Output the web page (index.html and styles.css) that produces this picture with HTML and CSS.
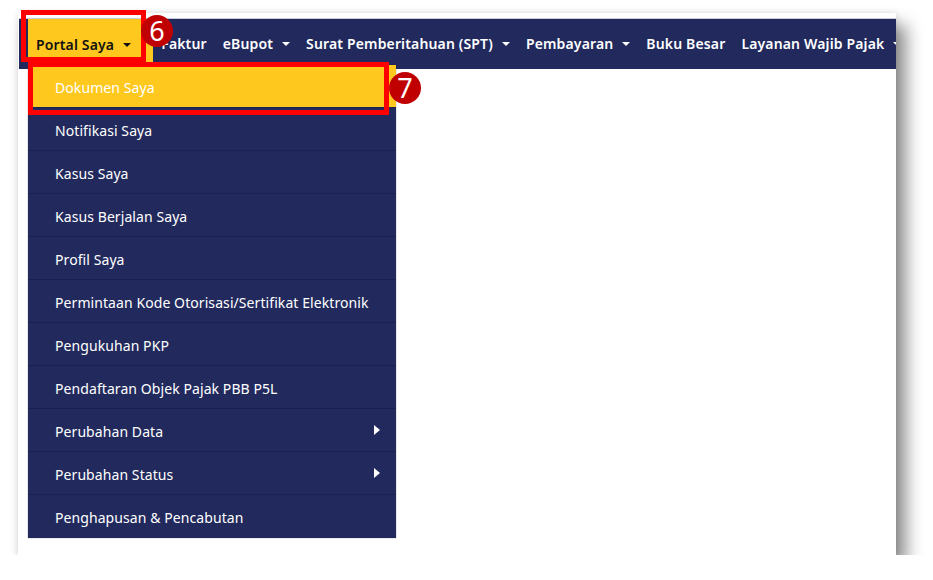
FILE: index.html
```html
<!DOCTYPE html>
<html lang="en">
    <head>
        <meta charset="UTF-8">
        <meta name="viewport" content="width=device-width, initial-scale=1.0">
        <title>Portal Saya - Dokumen Saya</title>
        <link rel="stylesheet" href="styles.css">
    </head>
    <body>
        <div class="shot">
            <div class="card">
                <nav class="navbar">
                    <ul class="nav">
                        <li class="nav-item active"><span class="caret">Portal Saya</span></li>
                        <li class="nav-item">Faktur</li>
                        <li class="nav-item"><span class="caret">eBupot</span></li>
                        <li class="nav-item"><span class="caret">Surat Pemberitahuan (SPT)</span></li>
                        <li class="nav-item"><span class="caret">Pembayaran</span></li>
                        <li class="nav-item">Buku Besar</li>
                        <li class="nav-item"><span class="caret">Layanan Wajib Pajak</span></li>
                    </ul>
                </nav>

                <ul class="dropdown">
                    <li class="dropdown-item active">Dokumen Saya</li>
                    <li class="dropdown-item">Notifikasi Saya</li>
                    <li class="dropdown-item">Kasus Saya</li>
                    <li class="dropdown-item">Kasus Berjalan Saya</li>
                    <li class="dropdown-item">Profil Saya</li>
                    <li class="dropdown-item">Permintaan Kode Otorisasi/Sertifikat Elektronik</li>
                    <li class="dropdown-item">Pengukuhan PKP</li>
                    <li class="dropdown-item">Pendaftaran Objek Pajak PBB P5L</li>
                    <li class="dropdown-item submenu">Perubahan Data</li>
                    <li class="dropdown-item submenu">Perubahan Status</li>
                    <li class="dropdown-item">Penghapusan &amp; Pencabutan</li>
                </ul>

                <!-- tutorial highlights -->
                <div class="highlight highlight-portal"></div>
                <div class="highlight highlight-dokumen"></div>
                <div class="step step-6">6</div>
                <div class="step step-7">7</div>
            </div>
        </div>
    </body>
</html>
```

FILE: styles.css
```css
body {
    margin: 0;
    padding: 0;
    background-color: #fff;
    font-family: "Noto Sans", "Open Sans", sans-serif;
    overflow: hidden;
}

.shot {
    padding: 13px 0 0 18px;
}

.card {
    position: relative;
    width: 878px;
    height: 542px;
    background-color: #fff;
    box-shadow: 0 0 6px rgba(0, 0, 0, 0.12), 10px 12px 16px rgba(0, 0, 0, 0.45);
}

.navbar {
    position: relative;
    top: 5px;
    margin-left: 1px;
    height: 51px;
    background-color: #222a5d;
    border-top: 1px solid #c9cbd6;
    box-sizing: border-box;
    overflow: hidden;
}

.nav {
    list-style: none;
    margin: 0;
    padding: 0 0 0 9px;
    display: flex;
    height: 100%;
    white-space: nowrap;
}

.nav-item {
    display: flex;
    align-items: center;
    padding: 0 8px 1px;
    color: #fff;
    font-size: 14px;
    font-weight: 600;
    letter-spacing: 0.15px;
}

.nav-item.active {
    background-color: #fec81f;
    color: #111;
    padding-right: 22px;
    padding-bottom: 0;
}

.caret::after {
    content: "";
    display: inline-block;
    margin-left: 9px;
    vertical-align: 3px;
    border-top: 4px solid currentColor;
    border-left: 4px solid transparent;
    border-right: 4px solid transparent;
}

.dropdown {
    position: absolute;
    left: 10px;
    top: 52px;
    width: 368px;
    margin: 0;
    padding: 0;
    list-style: none;
    background-color: #222a5d;
    box-shadow: 0 0 1px rgba(0, 0, 0, 0.5);
}

.dropdown-item {
    position: relative;
    height: 43px;
    box-sizing: border-box;
    display: flex;
    align-items: center;
    padding: 2px 0 0 27px;
    color: #fff;
    font-size: 14px;
    letter-spacing: 0.08px;
    border-bottom: 1px solid #1a2150;
}

.dropdown-item:last-child {
    border-bottom: none;
}

.dropdown-item.active {
    background-color: #fec81f;
}

.submenu::after {
    content: "";
    position: absolute;
    right: 16px;
    top: 16px;
    border-left: 6px solid #fff;
    border-top: 5px solid transparent;
    border-bottom: 5px solid transparent;
}

.highlight {
    position: absolute;
    border: 5px solid #ff0000;
    box-sizing: border-box;
}

.highlight-portal {
    left: 3px;
    top: -3px;
    width: 125px;
    height: 52px;
}

.highlight-dokumen {
    left: 10px;
    top: 49px;
    width: 361px;
    height: 53px;
}

.step {
    position: absolute;
    width: 32px;
    height: 32px;
    border-radius: 50%;
    background-color: #c00000;
    color: #fff;
    font-size: 27px;
    line-height: 32px;
    text-align: center;
}

.step-6 {
    left: 123px;
    top: 2px;
}

.step-7 {
    left: 371px;
    top: 59px;
}
```
